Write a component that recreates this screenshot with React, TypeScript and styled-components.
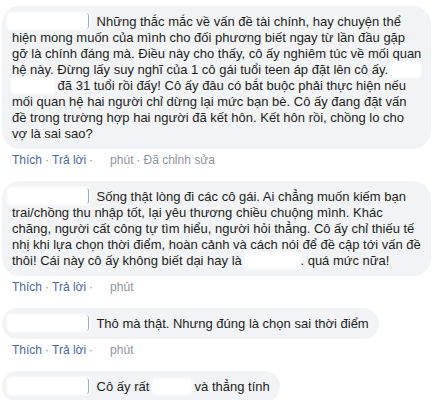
import { createGlobalStyle, styled } from "styled-components";

const GlobalStyle = createGlobalStyle`
  body {
    margin: 0;
    background: #fff;
    font-family: "Liberation Sans", Arial, sans-serif;
  }
`;

const Thread = styled.div`
  display: flex;
  flex-direction: column;
  align-items: flex-start;
  gap: 13px;
  padding: 6px 0 0 2px;
`;

const Comment = styled.div`
  display: flex;
  flex-direction: column;
  align-items: flex-start;
`;

const Bubble = styled.div`
  display: inline-block;
  background: #f2f3f5;
  border-radius: 18px;
  padding: 7px 10px;
  font-size: 13px;
  line-height: 16px;
  color: #1c1e21;
  white-space: nowrap;
`;

// blurred white patch where a name was hidden in the screenshot
const Hidden = styled.span<{ w: number }>`
  display: inline-block;
  width: ${(p) => p.w}px;
  height: 15px;
  vertical-align: -3px;
  background: #fff;
  border-radius: 3px;
  box-shadow: 0 0 3px 1px #fff;
`;

const Name = styled.span`
  display: inline-block;
  margin-left: -4px;
  margin-right: 4px;
  vertical-align: -3px;
  width: 80px;
  height: 16px;
  background: #fff;
  border-radius: 3px;
  box-shadow: 0 0 3px 1px #fff;
  border-right: 1px solid #9aaad0;
`;

const Meta = styled.div`
  margin-top: 3px;
  padding-left: 10px;
  font-size: 12px;
  line-height: 16px;
  color: #90949c;
`;

const Link = styled.span`
  color: #4b67a1;
`;

const Dot = styled.span`
  margin: 0 3px;
`;

const Gap = styled.span`
  display: inline-block;
  width: 14px;
`;

function Actions({ edited }: { edited?: boolean }) {
  return (
    <Meta>
      <Link>Thích</Link>
      <Dot>·</Dot>
      <Link>Trả lời</Link>
      <Dot>·</Dot>
      <Gap />
      phút
      {edited && (
        <>
          <Dot>·</Dot>Đã chỉnh sửa
        </>
      )}
    </Meta>
  );
}

export default function App() {
  return (
    <>
      <GlobalStyle />
      <Thread>
        <Comment>
          <Bubble>
            <Name /> Những thắc mắc về vấn đề tài chính, hay chuyện thể
            <br />
            hiện mong muốn của mình cho đối phương biết ngay từ lần đầu gặp
            <br />
            gỡ là chính đáng mà. Điều này cho thấy, cô ấy nghiêm túc về mối quan
            <br />
            hệ này. Đừng lấy suy nghĩ của 1 cô gái tuổi teen áp đặt lên cô ấy. <Hidden w={28} />
            <br />
            <Hidden w={42} /> đã 31 tuổi rồi đấy! Cô ấy đâu có bắt buộc phải thực hiện nếu
            <br />
            mối quan hệ hai người chỉ dừng lại mức bạn bè. Cô ấy đang đặt vấn
            <br />
            đề trong trường hợp hai người đã kết hôn. Kết hôn rồi, chồng lo cho
            <br />
            vợ là sai sao?
          </Bubble>
          <Actions edited />
        </Comment>

        <Comment>
          <Bubble>
            <Name /> Sống thật lòng đi các cô gái. Ai chẳng muốn kiếm bạn
            <br />
            trai/chồng thu nhập tốt, lại yêu thương chiều chuộng mình. Khác
            <br />
            chăng, người cất công tự tìm hiểu, người hỏi thẳng. Cô ấy chỉ thiếu tế
            <br />
            nhị khi lựa chọn thời điểm, hoàn cảnh và cách nói để đề cập tới vấn đề
            <br />
            thôi! Cái này cô ấy không biết dại hay là <Hidden w={55} />. quá mức nữa!
          </Bubble>
          <Actions />
        </Comment>

        <Comment>
          <Bubble>
            <Name /> Thô mà thật. Nhưng đúng là chọn sai thời điểm
          </Bubble>
          <Actions />
        </Comment>

        <Comment>
          <Bubble>
            <Name /> Cô ấy rất <Hidden w={38} /> và thẳng tính
          </Bubble>
        </Comment>
      </Thread>
    </>
  );
}
